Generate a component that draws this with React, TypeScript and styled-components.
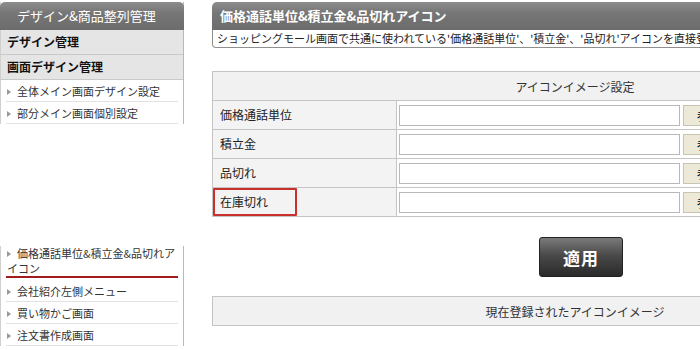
import React from 'react';
import styled, {createGlobalStyle} from "styled-components";

const GlobalStyle = createGlobalStyle`
    body {
        margin: 0;
        background: #fff;
        font-family: "Noto Sans CJK JP", "Liberation Sans", sans-serif;
        font-size: 12px;
        color: #222;
    }
`

const sideTop = ["全体メイン画面デザイン設定", "部分メイン画面個別設定"];
const sideBottom = ["会社紹介左側メニュー", "買い物かご画面", "注文書作成画面"];
const rows = ["価格通話単位", "積立金", "品切れ", "在庫切れ"];

export default function App() {
    return (
        <Page>
            <GlobalStyle/>
            <Side>
                <SideBlock>
                    <SideHeader>デザイン&amp;商品整列管理</SideHeader>
                    <SideGroup>デザイン管理</SideGroup>
                    <SideGroup>画面デザイン管理</SideGroup>
                    <SideList>
                        {sideTop.map(s => <SideItem key={s}>{s}</SideItem>)}
                    </SideList>
                </SideBlock>
                <SideBlock>
                    <SideList>
                        <SideItem active>価格通話単位&amp;積立金&amp;品切れアイコン</SideItem>
                        {sideBottom.map(s => <SideItem key={s}>{s}</SideItem>)}
                    </SideList>
                </SideBlock>
            </Side>
            <Main>
                <TitleBox>
                    <Title>価格通話単位&amp;積立金&amp;品切れアイコン</Title>
                    <Desc>ショッピングモール画面で共通に使われている'価格通話単位'、'積立金'、'品切れ'アイコンを直接登録できます。</Desc>
                </TitleBox>
                <Table>
                    <thead>
                    <tr>
                        <HeadCell colSpan={2}>アイコンイメージ設定</HeadCell>
                    </tr>
                    </thead>
                    <tbody>
                    {rows.map((r, i) => (
                        <tr key={r}>
                            <LabelCell>
                                <Label marked={i === 3}>{r}</Label>
                            </LabelCell>
                            <ValueCell>
                                <Field>
                                    <Input/>
                                    <Browse>参照...</Browse>
                                </Field>
                            </ValueCell>
                        </tr>
                    ))}
                    </tbody>
                </Table>
                <ButtonRow>
                    <Apply>適用</Apply>
                </ButtonRow>
                <Table>
                    <thead>
                    <tr>
                        <HeadCell>現在登録されたアイコンイメージ</HeadCell>
                    </tr>
                    </thead>
                </Table>
            </Main>
        </Page>
    );
}

const Page = styled.div`
    width: 700px;
    height: 350px;
    overflow: hidden;
    display: flex;
    align-items: flex-start;
    gap: 28px;
`

const Side = styled.div`
    width: 184px;
    flex-shrink: 0;
    padding-top: 2px;
    display: flex;
    flex-direction: column;
    gap: 122px;
`

const SideBlock = styled.div`
    border-right: 1px solid #b9b9b9;
    border-left: 1px solid #d0d0d0;
`

const SideHeader = styled.div`
    height: 28px;
    line-height: 27px;
    margin: 0 -1px;
    padding-left: 17px;
    border-radius: 5px 5px 0 0;
    background: linear-gradient(#8c8c8c, #767676 40%, #6c6c6c);
    color: #fff;
    font-size: 13px;
`

const SideGroup = styled.div`
    height: 24px;
    line-height: 24px;
    padding-left: 6px;
    background: #e5e5e5;
    border-bottom: 1px solid #c9c9c9;
    font-weight: bold;
    color: #111;
`

const SideList = styled.ul`
    margin: 0;
    padding: 0 5px 0 5px;
    list-style: none;
`

const SideItem = styled.li<{ active?: boolean }>`
    padding: ${p => p.active ? "0 0 0 1px" : "4px 0 3px 1px"};
    line-height: ${p => p.active ? "15px" : "14px"};
    font-size: 11px;
    border-bottom: ${p => p.active ? "2px solid #a11c1c" : "1px solid #e3e3e3"};
    margin-bottom: ${p => p.active ? "2px" : "0"};
    color: #333;

    &::before {
        content: "";
        display: inline-block;
        vertical-align: 1px;
        margin-right: 6px;
        border-left: 4px solid #999;
        border-top: 3px solid transparent;
        border-bottom: 3px solid transparent;
    }
`

const Main = styled.div`
    width: 726px;
    flex-shrink: 0;
    padding-top: 2px;
`

const TitleBox = styled.div`
    margin-bottom: 23px;
`

const Title = styled.div`
    height: 28px;
    line-height: 28px;
    padding-left: 8px;
    border-radius: 5px 5px 0 0;
    background: linear-gradient(#8c8c8c, #767676 40%, #6c6c6c);
    color: #fff;
    font-size: 13px;
    font-weight: bold;
`

const Desc = styled.div`
    height: 17px;
    line-height: 17px;
    padding-left: 4px;
    border: 1px solid #8f8f8f;
    border-top: none;
    border-radius: 0 0 4px 4px;
    white-space: nowrap;
    overflow: hidden;
    font-size: 11px;
    color: #222;
`

const Table = styled.table`
    width: 100%;
    border-collapse: collapse;
    border: 1px solid #c4c4c4;
    margin-bottom: 20px;
`

const HeadCell = styled.th`
    height: 28px;
    padding: 0;
    background: #f1f1f1;
    font-weight: normal;
    text-align: center;
    color: #333;
`

const LabelCell = styled.td`
    width: 183px;
    height: 28px;
    padding: 0;
    background: #f3f3f3;
    border: 1px solid #c4c4c4;
`

const Label = styled.div<{ marked?: boolean }>`
    height: 28px;
    width: 84px;
    line-height: 24px;
    padding-left: 5px;
    box-sizing: border-box;
    border: 2px solid ${p => p.marked ? "#c9302c" : "transparent"};
    border-radius: 1px;
    color: #222;
`

const ValueCell = styled.td`
    padding: 0 0 0 2px;
    border: 1px solid #c4c4c4;
    background: #fff;
`

const Field = styled.div`
    display: flex;
    gap: 3px;
    align-items: center;
`

const Input = styled.input`
    width: 281px;
    height: 21px;
    box-sizing: border-box;
    border: 1px solid #b8b8b8;
    background: #fff;
    margin: 0;
`

const Browse = styled.button`
    height: 21px;
    padding: 0 8px 0 13px;
    border: 1px solid #c8c4b0;
    background: #ece9d8;
    font-family: inherit;
    font-size: 12px;
`

const ButtonRow = styled.div`
    display: flex;
    padding-left: 327px;
    margin-bottom: 19px;
`

const Apply = styled.button`
    width: 84px;
    height: 40px;
    border: 1px solid #222;
    border-radius: 3px;
    background: linear-gradient(#7a7a7a, #4a4a4a 45%, #2a2a2a);
    color: #fff;
    font-family: inherit;
    font-size: 17px;
    font-weight: bold;
    letter-spacing: 1px;
`
